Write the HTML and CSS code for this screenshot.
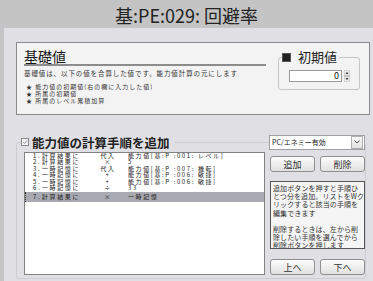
FILE: index.html
```html
<!DOCTYPE html>
<html lang="ja">

<head>
    <meta charset="UTF-8">
    <meta name="viewport" content="width=device-width, initial-scale=1.0">
    <title>基:PE:029: 回避率</title>
    <link rel="stylesheet" href="styles.css">
</head>

<body>
    <h1 class="page-title">基:PE:029: 回避率</h1>
    <div class="panel">
        <div class="base-box">
            <div class="base-main">
                <h2>基礎値</h2>
                <p class="desc">基礎値は、以下の値を合算した値です。能力値計算の元にします</p>
                <ul class="sources">
                    <li>★ 能力値の初期値(右の欄に入力した値)</li>
                    <li>★ 所属の初期値</li>
                    <li>★ 所属のレベル累積加算</li>
                </ul>
            </div>
            <fieldset class="init-group">
                <legend><span class="sq"></span>初期値</legend>
                <div class="spin">
                    <div class="spin-field">0</div>
                    <svg class="spin-arrows" width="6" height="12" viewBox="0 0 6 12">
                        <rect x="0" y="0" width="6" height="5.5" fill="#ececec" stroke="#999" stroke-width="0.5"/>
                        <rect x="0" y="6.5" width="6" height="5.5" fill="#ececec" stroke="#999" stroke-width="0.5"/>
                        <path d="M1.5 4 L3 2 L4.5 4 Z" fill="#333"/>
                        <path d="M1.5 8 L3 10 L4.5 8 Z" fill="#333"/>
                    </svg>
                </div>
            </fieldset>
        </div>

        <div class="steps">
            <div class="steps-head">
                <div class="steps-title">
                    <svg class="check" width="8" height="8" viewBox="0 0 8 8">
                        <rect x="0.5" y="0.5" width="7" height="7" fill="#f4f4f4" stroke="#888"/>
                        <path d="M2 4 L3.5 5.5 L6 2.5" fill="none" stroke="#888" stroke-width="0.9"/>
                    </svg>
                    能力値の計算手順を追加
                </div>
                <div class="select">
                    <span>PC/エネミー有効</span>
                    <span class="select-btn">
                        <svg width="6" height="4" viewBox="0 0 6 4"><path d="M0.5 0.5 L3 3 L5.5 0.5" fill="none" stroke="#444" stroke-width="1"/></svg>
                    </span>
                </div>
            </div>
            <div class="steps-body">
                <div class="step-list">
                    <div class="step"><span>1.</span><span>計算結果に</span><span class="op">代入</span><span>能力値[基:P :001: レベル]</span></div>
                    <div class="step"><span>2.</span><span>計算結果に</span><span class="op">×</span><span>5</span></div>
                    <div class="step"><span>3.</span><span>一時記憶に</span><span class="op">代入</span><span>能力値[基:P :007: 機転]</span></div>
                    <div class="step"><span>4.</span><span>一時記憶に</span><span class="op">+</span><span>能力値[基:P :006: 敏捷]</span></div>
                    <div class="step"><span>5.</span><span>一時記憶に</span><span class="op">+</span><span>能力値[基:P :006: 敏捷]</span></div>
                    <div class="step"><span>6.</span><span>一時記憶に</span><span class="op">÷</span><span>33</span></div>
                    <div class="step selected"><span>7.</span><span>計算結果に</span><span class="op">×</span><span>一時記憶</span></div>
                </div>
                <div class="side">
                    <div class="btn-row">
                        <button class="btn">追加</button>
                        <button class="btn">削除</button>
                    </div>
                    <div class="help">
                        追加ボタンを押すと手順ひ<br>
                        とつ分を追加。リストをWク<br>
                        リックすると該当の手順を<br>
                        編集できます<br>
                        <br>
                        削除するときは、左から削<br>
                        除したい手順を選んでから<br>
                        削除ボタンを押します
                    </div>
                    <div class="btn-row bottom">
                        <button class="btn">上へ</button>
                        <button class="btn">下へ</button>
                    </div>
                </div>
            </div>
        </div>
    </div>
</body>

</html>
```

FILE: styles.css
```css
body {
    margin: 0;
    width: 373px;
    height: 281px;
    overflow: hidden;
    background-color: #c4c4c4;
    font-family: "Noto Sans CJK JP", "Noto Sans", sans-serif;
    color: #222;
}

.page-title {
    margin: 0;
    height: 28px;
    line-height: 30px;
    text-align: center;
    font-size: 18px;
    font-weight: normal;
    color: #222;
}

.panel {
    margin-left: 4px;
    height: 253px;
    padding: 14px 3px 0 12px;
    box-sizing: border-box;
    background-color: #e0e0e4;
}

/* 基礎値 box */
.base-box {
    display: flex;
    height: 73px;
    border: 1px solid #8a8a8a;
    box-sizing: border-box;
    background-color: #f3f3f3;
}

.base-main {
    width: 249px;
    padding: 5px 0 0 7px;
    box-sizing: border-box;
}

.base-main h2 {
    margin: 0;
    font-size: 14px;
    line-height: 16px;
    font-weight: normal;
    border-bottom: 2px solid #8c8c8c;
    color: #1a1a1a;
}

.desc {
    margin: 3px 0 0;
    font-size: 6.5px;
    line-height: 9px;
    letter-spacing: 0.9px;
    white-space: nowrap;
    color: #333;
}

.sources {
    list-style: none;
    margin: 5px 0 0;
    padding: 0 0 0 2px;
    font-size: 6px;
    line-height: 7px;
    letter-spacing: 1px;
    white-space: nowrap;
    color: #333;
}

.init-group {
    margin: 7px 0 0 12px;
    padding: 0 3px 0 3px;
    width: 82px;
    height: 40px;
    box-sizing: border-box;
    border: 1px solid #c6c6c6;
    border-radius: 3px;
}

.init-group legend {
    padding: 0 2px 0 0;
    font-size: 13px;
    line-height: 14px;
    display: flex;
    align-items: center;
}

.sq {
    display: inline-block;
    width: 7px;
    height: 7px;
    margin-right: 7px;
    background-color: #222;
    border: 1px solid #555;
}

.spin {
    display: flex;
    align-items: center;
    margin: 6px 0 0 7px;
}

.spin-field {
    width: 53px;
    height: 12px;
    box-sizing: border-box;
    border: 1px solid #9a9a9a;
    background-color: white;
    text-align: right;
    font-size: 9px;
    line-height: 10px;
    padding-right: 2px;
}

.spin-arrows {
    margin-left: 2px;
}

/* 計算手順 */
.steps {
    margin-top: 27px;
    width: 350px;
    height: 137px;
    box-sizing: border-box;
    border: 1px solid #cdcdd2;
    border-radius: 3px;
}

.steps-head {
    display: flex;
    justify-content: space-between;
    align-items: center;
    height: 16px;
    margin: -9px 0 0 4px;
}

.steps-title {
    display: flex;
    align-items: center;
    padding-right: 5px;
    background-color: #e0e0e4;
    font-size: 12.5px;
    font-weight: bold;
    color: #222;
}

.check {
    margin-right: 3px;
}

.select {
    display: flex;
    justify-content: space-between;
    align-items: center;
    width: 96px;
    height: 15px;
    box-sizing: border-box;
    border: 1px solid #a0a0a0;
    background-color: white;
    font-size: 7px;
    padding-left: 2px;
}

.select-btn {
    display: flex;
    align-items: center;
    justify-content: center;
    width: 10px;
    height: 11px;
    margin-right: 1px;
    border: 1px solid #b0b0b0;
    background: linear-gradient(#fafafa, #e0e0e0);
}

.steps-body {
    display: flex;
    margin-top: 2px;
    padding-left: 7px;
}

.step-list {
    width: 241px;
    height: 123px;
    box-sizing: border-box;
    border: 1px solid #828282;
    background-color: white;
    font-size: 6px;
    letter-spacing: 1.6px;
    color: #222;
}

.step {
    display: grid;
    grid-template-columns: 9px 46px 40px 1fr;
    height: 6.4px;
    line-height: 6.4px;
    padding-left: 8px;
    white-space: nowrap;
}

.step .op {
    text-align: center;
}

.step.selected {
    margin-top: 1px;
    height: 10px;
    line-height: 10px;
    padding-left: 7px;
    background-color: #a9a9b1;
    border-left: 1px dotted #333;
}

.side {
    width: 95px;
    margin-left: 5px;
}

.btn-row {
    display: flex;
    justify-content: space-between;
    margin-top: 4px;
}

.btn-row.bottom {
    margin-top: 10px;
}

.btn {
    width: 45px;
    height: 16px;
    padding: 0;
    border: 1px solid #8f8f8f;
    border-radius: 3px;
    background: linear-gradient(#fdfdfd, #e0e0e0);
    font-family: inherit;
    font-size: 9px;
    color: #333;
}

.help {
    margin-top: 9px;
    height: 68px;
    box-sizing: border-box;
    padding: 2px 2px;
    border: 1px solid #555;
    background-color: #f5f5f5;
    font-size: 7px;
    line-height: 8.2px;
    letter-spacing: 0.1px;
    white-space: nowrap;
    overflow: hidden;
    color: #333;
}
```
